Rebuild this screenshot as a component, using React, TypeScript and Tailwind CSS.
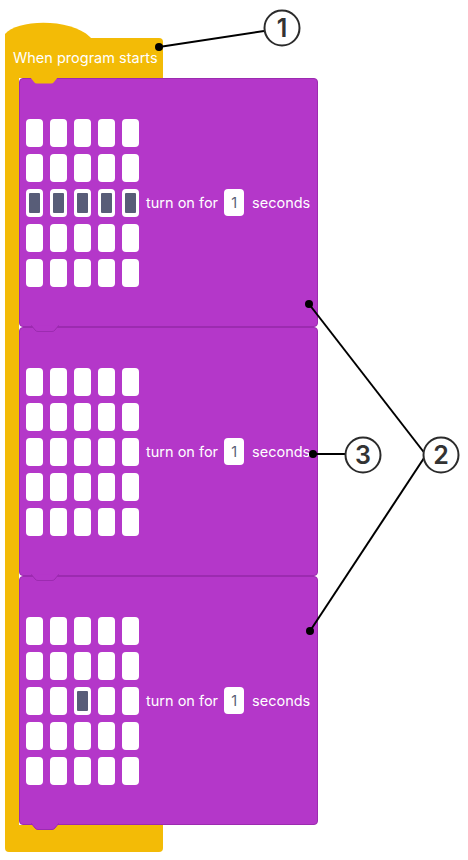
const YELLOW = "bg-[#f3bb06]";

const blocks: number[][] = [
  [10, 11, 12, 13, 14],
  [],
  [12],
];

function Tab({ color, border }: { color: string; border: string }) {
  return (
    <svg
      className="absolute left-[11px] -bottom-[6px] z-10"
      width="28"
      height="7"
      viewBox="0 0 28 7"
    >
      <path d="M0 0 L4 5 Q5 6.5 7 6.5 L21 6.5 Q23 6.5 24 5 L28 0" fill={color} stroke={border} strokeWidth="1" />
      <rect x="0.5" y="-1" width="27" height="1.5" fill={color} />
    </svg>
  );
}

function Led({ on }: { on: boolean }) {
  return (
    <div className="w-[17px] h-[28px] rounded-[4px] bg-white px-[3px] py-[4px]">
      {on && <div className="h-full w-full rounded-[1px] bg-[#585d78]" />}
    </div>
  );
}

function TurnOnBlock({ lit }: { lit: number[] }) {
  return (
    <div className="relative h-[249px] w-[299px] rounded-[4px] border border-[#9c2bb0] bg-[#b437c9] flex items-center pl-[6px]">
      <div className="grid grid-cols-5 gap-x-[7px] gap-y-[7px]">
        {Array.from({ length: 25 }).map((_, i) => (
          <Led key={i} on={lit.includes(i)} />
        ))}
      </div>
      <div className="flex items-center text-white text-[14.5px] ml-[7px]">
        <span>turn on for</span>
        <div className="ml-[6px] w-[20px] h-[27px] rounded-[4px] bg-white text-[#575e75] flex items-center justify-center">
          1
        </div>
        <span className="ml-[8px]">seconds</span>
      </div>
      <Tab color="#b437c9" border="#9c2bb0" />
    </div>
  );
}

function Annotations() {
  const circle = (cx: number, cy: number, n: string) => (
    <g>
      <circle cx={cx} cy={cy} r="17.5" fill="white" stroke="#2b2b2b" strokeWidth="2" />
      <text
        x={cx}
        y={cy + 9}
        textAnchor="middle"
        fontSize="25"
        fontWeight="600"
        fill="#333"
        fontFamily="Inter, sans-serif"
      >
        {n}
      </text>
    </g>
  );
  return (
    <svg className="absolute inset-0 pointer-events-none z-20" width="468" height="860">
      <g stroke="black" strokeWidth="2">
        <line x1="159" y1="47" x2="264" y2="31" />
        <line x1="309" y1="304" x2="426" y2="455" />
        <line x1="310" y1="631" x2="426" y2="455" />
        <line x1="313" y1="454" x2="346" y2="454" />
      </g>
      <g fill="black">
        <circle cx="159" cy="47" r="4" />
        <circle cx="309" cy="304" r="4" />
        <circle cx="313" cy="454" r="4" />
        <circle cx="310" cy="631" r="4" />
      </g>
      {circle(282, 28, "1")}
      {circle(441, 455, "2")}
      {circle(363, 455, "3")}
    </svg>
  );
}

export default function App() {
  return (
    <div className="relative w-[468px] h-[860px] bg-white overflow-hidden" style={{ fontFamily: "Inter, 'Noto Sans', sans-serif" }}>
      <div className="pl-[5px] pt-[22px] w-fit">
        {/* hat */}
        <svg width="86" height="16" viewBox="0 0 86 16" className="block">
          <path d="M0 16 L0 12 C 12 -3, 66 -4, 85 15 L86 16 Z" fill="#f3bb06" />
        </svg>
        {/* header */}
        <div className={`relative w-[158px] h-[40px] ${YELLOW} rounded-tr-[4px] flex items-center pl-[8px] text-white text-[14.5px]`}>
          When program starts
          <svg className="absolute left-[25px] -bottom-[6px] z-10" width="28" height="7" viewBox="0 0 28 7">
            <path d="M0 0 L4 5 Q5 6.5 7 6.5 L21 6.5 Q23 6.5 24 5 L28 0 Z" fill="#f3bb06" />
          </svg>
        </div>
        {/* body */}
        <div className="flex">
          <div className={`w-[14px] ${YELLOW}`} />
          <div className="flex flex-col">
            {blocks.map((lit, i) => (
              <TurnOnBlock key={i} lit={lit} />
            ))}
          </div>
        </div>
        {/* footer */}
        <div className={`w-[158px] h-[27px] ${YELLOW} rounded-b-[4px]`} />
      </div>
      <Annotations />
    </div>
  );
}
